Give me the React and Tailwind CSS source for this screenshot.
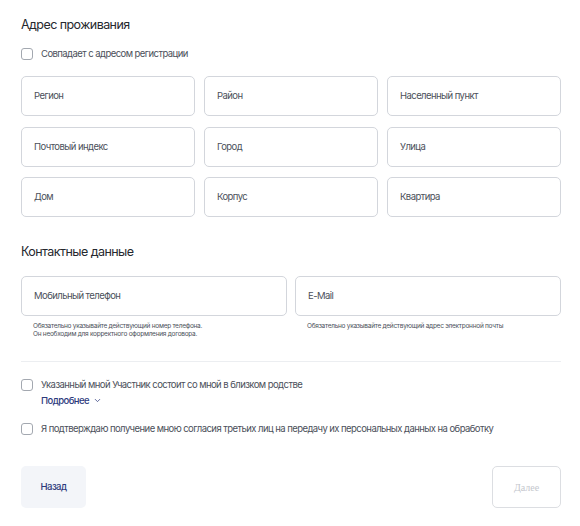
import { ChevronDown } from 'lucide-react';

const ADDRESS = [
  'Регион', 'Район', 'Населенный пункт',
  'Почтовый индекс', 'Город', 'Улица',
  'Дом', 'Корпус', 'Квартира',
];

function Field({ label }) {
  return (
    <div className="h-[40px] rounded-[5px] border border-[#d3d6dc] bg-white flex items-center px-[12px] text-[9.5px] text-[#4b505a]">
      {label}
    </div>
  );
}

function Check({ children }) {
  return (
    <div className="flex items-center gap-[8px]">
      <span className="w-[12px] h-[12px] rounded-[3px] border border-[#a3a8b0] bg-white shrink-0" />
      <span className="text-[9.5px] text-[#4b505a]">{children}</span>
    </div>
  );
}

export default function App() {
  return (
    <div className="w-[580px] h-[526px] bg-white font-['Inter',sans-serif] tracking-[-0.035em]">
      <div className="w-[540px] ml-[21px] pt-[16px]">
        <h2 className="text-[12.5px] leading-[18px] text-[#25282e]">Адрес проживания</h2>

        <div className="mt-[13px]">
          <Check>Совпадает с адресом регистрации</Check>
        </div>

        <div className="mt-[15px] grid grid-cols-3 gap-x-[9px] gap-y-[10.5px]">
          {ADDRESS.map(label => <Field key={label} label={label} />)}
        </div>

        <h2 className="mt-[26px] text-[12.5px] leading-[18px] text-[#25282e]">Контактные данные</h2>

        <div className="mt-[15px] grid grid-cols-2 gap-x-[8px]">
          <div>
            <Field label="Мобильный телефон" />
            <p className="mt-[7px] pl-[12px] text-[6.5px] leading-[7.5px] text-[#4b505a] tracking-[-0.04em]">
              Обязательно указывайте действующий номер телефона.<br />
              Он необходим для корректного оформления договора.
            </p>
          </div>
          <div>
            <Field label="E-Mail" />
            <p className="mt-[7px] pl-[12px] text-[6.5px] leading-[7.5px] text-[#4b505a] tracking-[-0.04em]">
              Обязательно указывайте действующий адрес электронной почты
            </p>
          </div>
        </div>

        <div className="mt-[23px] h-px bg-[#eceef1]" />

        <div className="mt-[16px]">
          <Check>Указанный мной Участник состоит со мной в близком родстве</Check>
          <button className="ml-[20px] mt-[1px] flex items-center gap-[4px] text-[9.5px] font-medium text-[#2d3a7c]">
            Подробнее
            <ChevronDown size={9} strokeWidth={2} />
          </button>
        </div>

        <div className="mt-[14px]">
          <Check>Я подтверждаю получение мною согласия третьих лиц на передачу их персональных данных на обработку</Check>
        </div>

        <div className="mt-[30px] flex justify-between">
          <button className="w-[65px] h-[42px] rounded-[5px] bg-[#f3f5f9] text-[9.5px] font-medium text-[#2d3a7c]">
            Назад
          </button>
          <button className="w-[69px] h-[42px] rounded-[5px] border border-[#dcdee2] bg-white text-[10px] text-[#c4c7cd] font-['Liberation_Serif',serif] tracking-normal">
            Далее
          </button>
        </div>
      </div>
    </div>
  );
}
